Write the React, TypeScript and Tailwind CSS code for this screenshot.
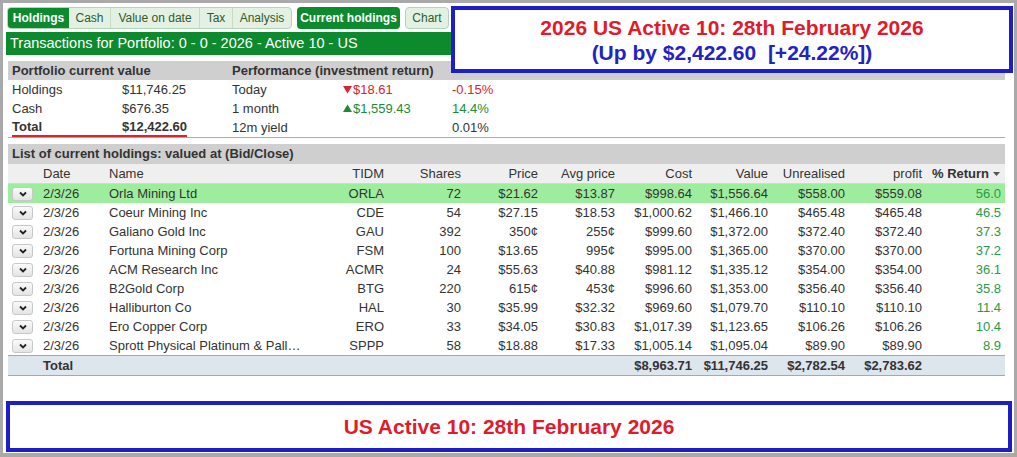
import React from "react";

const rows = [
  ["Orla Mining Ltd", "ORLA", "72", "$21.62", "$13.87", "$998.64", "$1,556.64", "$558.00", "$559.08", "56.0"],
  ["Coeur Mining Inc", "CDE", "54", "$27.15", "$18.53", "$1,000.62", "$1,466.10", "$465.48", "$465.48", "46.5"],
  ["Galiano Gold Inc", "GAU", "392", "350¢", "255¢", "$999.60", "$1,372.00", "$372.40", "$372.40", "37.3"],
  ["Fortuna Mining Corp", "FSM", "100", "$13.65", "995¢", "$995.00", "$1,365.00", "$370.00", "$370.00", "37.2"],
  ["ACM Research Inc", "ACMR", "24", "$55.63", "$40.88", "$981.12", "$1,335.12", "$354.00", "$354.00", "36.1"],
  ["B2Gold Corp", "BTG", "220", "615¢", "453¢", "$996.60", "$1,353.00", "$356.40", "$356.40", "35.8"],
  ["Halliburton Co", "HAL", "30", "$35.99", "$32.32", "$969.60", "$1,079.70", "$110.10", "$110.10", "11.4"],
  ["Ero Copper Corp", "ERO", "33", "$34.05", "$30.83", "$1,017.39", "$1,123.65", "$106.26", "$106.26", "10.4"],
  ["Sprott Physical Platinum & Pall…", "SPPP", "58", "$18.88", "$17.33", "$1,005.14", "$1,095.04", "$89.90", "$89.90", "8.9"],
];

const cols = "grid grid-cols-[30px_66px_226px_59px_77px_77px_77px_77px_76px_77px_77px_78px] items-center";
const perfCols = "grid grid-cols-[110px_110px_111px_109px_1fr] items-center pl-[4px]";

function Chevron() {
  return (
    <span className="ml-[4px] flex h-[14px] w-[21px] items-center justify-center rounded-[3px] border border-[#c8c8c8] bg-gradient-to-b from-[#fafafa] to-[#e4e4e4]">
      <svg width="8" height="6" viewBox="0 0 8 6">
        <polyline points="1,1.5 4,4.5 7,1.5" fill="none" stroke="#222" strokeWidth="1.8" />
      </svg>
    </span>
  );
}

function Tri({ up }: { up?: boolean }) {
  return (
    <svg width="9" height="9" viewBox="0 0 9 9" className="mr-[1px] inline-block">
      {up ? <polygon points="0,8 9,8 4.5,0.5" fill="#1d8a36" /> : <polygon points="0,1 9,1 4.5,8.5" fill="#e0202a" />}
    </svg>
  );
}

export default function App() {
  return (
    <div className="h-[457px] w-[1017px] bg-[#a9a9a9] pb-[4px] pl-[3px] pr-[3px] pt-[3px] font-['Liberation_Sans',Arial,sans-serif] text-[13px] text-[#333]">
      <div className="relative h-[450px] w-[1011px] bg-white">
        {/* tabs */}
        <div className="ml-[4px] flex pt-[4px] text-[12px]">
          <div className="flex h-[22px] overflow-hidden rounded-[4px] border border-[#b8d2b8] bg-[#e3f1e3] text-[#2e5a2e]">
            <span className="flex w-[61px] items-center justify-center bg-[#0d8a2e] font-bold text-white">Holdings</span>
            <span className="flex w-[41px] items-center justify-center">Cash</span>
            <span className="flex w-[89px] items-center justify-center border-l border-[#c6dac6]">Value on date</span>
            <span className="flex w-[33px] items-center justify-center border-l border-[#c6dac6]">Tax</span>
            <span className="flex w-[59px] items-center justify-center border-l border-[#c6dac6]">Analysis</span>
          </div>
          <span className="ml-[5px] flex h-[22px] w-[103px] items-center justify-center rounded-[4px] bg-[#0d8a2e] font-bold text-white">Current holdings</span>
          <span className="ml-[5px] flex h-[22px] w-[44px] items-center justify-center rounded-[4px] border border-[#b8d2b8] bg-[#e3f1e3] text-[#2e5a2e]">Chart</span>
        </div>

        <div className="ml-[3px] mt-[3px] flex h-[23px] w-[446px] items-center bg-[#0d8a2e] pl-[4px] text-[14.5px] text-white">
          Transactions for Portfolio: 0 - 0 - 2026 - Active 10 - US
        </div>

        {/* portfolio value */}
        <div className="ml-[5px] mt-[6px] w-[997px] border-b border-[#adadad]">
          <div className={`${perfCols} h-[19px] bg-[#cfcfcf] font-bold`}>
            <span className="col-span-2">Portfolio current value</span>
            <span className="col-span-3">Performance (investment return)</span>
          </div>
          <div className={`${perfCols} h-[19px]`}>
            <span>Holdings</span>
            <span>$11,746.25</span>
            <span>Today</span>
            <span className="flex items-center text-[#e0202a]"><Tri />$18.61</span>
            <span className="text-[#e0202a]">-0.15%</span>
          </div>
          <div className={`${perfCols} h-[19px]`}>
            <span>Cash</span>
            <span>$676.35</span>
            <span>1 month</span>
            <span className="flex items-center text-[#1d8a36]"><Tri up />$1,559.43</span>
            <span className="text-[#1d8a36]">14.4%</span>
          </div>
          <div className={`${perfCols} h-[19px]`}>
            <div className="col-span-2 flex h-[19px]">
              <div className="flex items-center border-b-2 border-[#e0202a] font-bold">
                <span className="w-[110px]">Total</span>
                <span>$12,422.60</span>
              </div>
            </div>
            <span>12m yield</span>
            <span />
            <span>0.01%</span>
          </div>
        </div>

        {/* holdings */}
        <div className="ml-[5px] mt-[6px] w-[997px]">
          <div className="flex h-[20px] items-center bg-[#cfcfcf] pl-[4px] font-bold">List of current holdings: valued at (Bid/Close)</div>
          <div className={`${cols} h-[20px] border-b border-[#d6d6d6] bg-[#efefef]`}>
            <span />
            <span className="pl-[5px]">Date</span>
            <span className="pl-[5px]">Name</span>
            <span className="pr-[5px] text-right">TIDM</span>
            <span className="pr-[5px] text-right">Shares</span>
            <span className="pr-[5px] text-right">Price</span>
            <span className="pr-[5px] text-right">Avg price</span>
            <span className="pr-[5px] text-right">Cost</span>
            <span className="pr-[5px] text-right">Value</span>
            <span className="pr-[5px] text-right">Unrealised</span>
            <span className="pr-[5px] text-right">profit</span>
            <span className="flex items-center pl-[5px] font-bold">
              % Return
              <svg width="7" height="4" viewBox="0 0 7 4" className="ml-[4px]"><polygon points="0,0 7,0 3.5,4" fill="#555" /></svg>
            </span>
          </div>
          {rows.map((r, i) => (
            <div key={r[1]} className={`${cols} h-[19px] ${i === 0 ? "bg-[#9eed9e]" : ""}`}>
              <Chevron />
              <span className="pl-[5px]">2/3/26</span>
              <span className="whitespace-nowrap pl-[5px]">{r[0]}</span>
              {r.slice(1, 9).map((v, j) => (
                <span key={j} className="pr-[5px] text-right">{v}</span>
              ))}
              <span className="pr-[4px] text-right text-[#2a9a4a]">{r[9]}</span>
            </div>
          ))}
          <div className={`${cols} h-[21px] border-y border-[#a8a8a8] bg-[#dde5ed] font-bold`}>
            <span />
            <span className="pl-[5px]">Total</span>
            <span />
            <span />
            <span />
            <span />
            <span />
            <span className="pr-[5px] text-right">$8,963.71</span>
            <span className="pr-[5px] text-right">$11,746.25</span>
            <span className="pr-[5px] text-right">$2,782.54</span>
            <span className="pr-[5px] text-right">$2,783.62</span>
            <span />
          </div>
        </div>

        <div className="ml-[3px] mt-[25px] flex h-[51px] w-[1006px] items-center justify-center border-4 border-[#1e1ec8] text-[21px] font-bold text-[#e01b2b]">
          US Active 10: 28th February 2026
        </div>

        {/* headline overlay */}
        <div className="absolute left-[448px] top-[3px] flex h-[67px] w-[562px] flex-col items-center justify-center border-4 border-[#1e1ec8] bg-white text-[21px] font-bold leading-[25px]">
          <span className="text-[#e01b2b]">2026 US Active 10: 28th February 2026</span>
          <span className="text-[#2323c4]">(Up by $2,422.60&nbsp;&nbsp;[+24.22%])</span>
        </div>
      </div>
    </div>
  );
}
